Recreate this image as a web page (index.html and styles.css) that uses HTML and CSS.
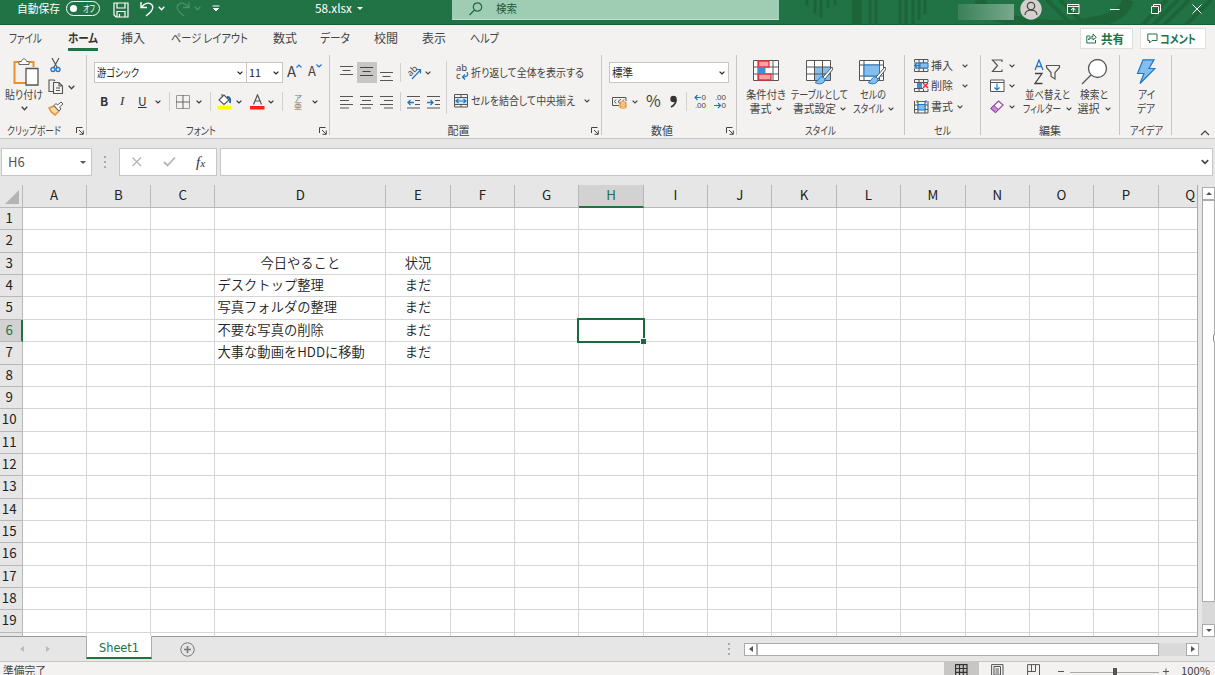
FILE: index.html
```html
<!DOCTYPE html>
<html lang="ja">
<head>
    <meta charset="UTF-8">
    <meta name="viewport" content="width=device-width, initial-scale=1.0">
    <title>58.xlsx</title>
    <link rel="stylesheet" href="styles.css">
</head>
<body>
    <svg class="defs">
        <symbol id="chev" viewBox="0 0 6 4"><path d="M.6 .6L3 3L5.4 .6" fill="none" stroke="currentColor" stroke-width="1.2"/></symbol>
        <symbol id="launch" viewBox="0 0 8 8"><path d="M.5 6V.5H6.500M3 3L7 7M7.300 3.500V7.300H3.500" fill="none" stroke="currentColor"/></symbol>
        <symbol id="brush" viewBox="0 0 18 19"><path d="M17 1L8 11L10 13L18 3Z" fill="#fff" stroke="#555"/><path d="M8 11C4 10 4 15 0 16.500C4 19 10 18 10 13Z" fill="#83beec" stroke="#1e78c8"/></symbol>
    </svg>

    <div class="titlebar">
        <svg class="pattern" width="430" height="25">
            <g fill="none" stroke="#1d6439" stroke-width="3">
                <path d="M22 0V6M30 0V14M36 0V18M43 0V8M50 0V5M85 0V25M91 0V25M115 0V25M121 0V25M128 0V25M134 0V20M140 0V14"/>
                <path d="M72 0V25" stroke-width="10"/>
                <path d="M195 0C200 30 335 38 343 0" stroke-width="11"/>
                <path d="M262 0L287 25M275 0L300 25M357 25L382 0M368 25L393 0M379 25L404 0M401 25L426 0" stroke-width="4"/>
            </g>
        </svg>
        <span class="t autosave" data-w="43">自動保存</span>
        <div class="toggle"><i></i><span class="t" data-w="12">オフ</span></div>
        <svg class="save" width="16" height="16" viewBox="0 0 16 16"><path d="M1 1H15V15H3L1 13ZM4 1V6H12V1M4 15V9.500H12V15M6.500 15V12" fill="none" stroke="#fff" stroke-width="1.200"/></svg>
        <svg class="undo" width="15" height="16" viewBox="0 0 15 16"><path d="M1 1V6.500H7M1.500 6.200C4 2.500 9 .5 12 4C15 8 10 12 6 15" fill="none" stroke="#fff" stroke-width="1.400"/></svg>
        <svg class="c1" width="7" height="5"><use href="#chev"/></svg>
        <svg class="redo" width="15" height="16" viewBox="0 0 15 16"><path d="M14 1V6.500H8M13.500 6.200C11 2.500 6 .5 3 4C0 8 5 12 9 15" fill="none" stroke="#4c9068" stroke-width="1.300"/></svg>
        <svg class="c2" width="7" height="5"><use href="#chev"/></svg>
        <svg class="custom" width="8" height="8"><path d="M.5 1H7.500M1.500 3.500L4 6L6.500 3.500Z" fill="#fff" stroke="#fff"/></svg>
        <span class="t filename" data-w="37">58.xlsx</span>
        <i class="caret"></i>
        <div class="search">
            <svg width="14" height="14" viewBox="0 0 14 14"><circle cx="8.500" cy="5" r="4.200" fill="none" stroke="#1d6b3e" stroke-width="1.200"/><path d="M5.500 8L.5 13" stroke="#1d6b3e" stroke-width="1.300"/></svg>
            <span class="t" data-w="21">検索</span>
        </div>
        <div class="account"></div>
        <svg class="avatar" width="22" height="22"><circle cx="11" cy="11" r="10.700" fill="#d4d0ce"/><circle cx="11" cy="8" r="3.700" fill="none" stroke="#444" stroke-width="1.200"/><path d="M5 17C5 10.500 17 10.500 17 17" fill="none" stroke="#444" stroke-width="1.200"/></svg>
        <svg class="winbtns" width="136" height="12" fill="none" stroke="#fff"><path d="M.5 1.500H12V10.500H.5ZM.5 3.500H12M6.300 9V5M4 7L6.300 5L8.600 7M43 6.500H52.500M84.500 3.500H91.500V10.500H84.500ZM86.500 3V1.500H93.500V8.500H92M125.500 1.500L134.500 10.500M134.500 1.500L125.500 10.500"/></svg>
    </div>

    <div class="tabs">
        <span class="t" data-w="33">ファイル</span>
        <span class="active"><span class="t" data-w="30">ホーム</span></span>
        <span class="t" data-w="24">挿入</span>
        <span class="t" data-w="77">ページ レイアウト</span>
        <span class="t" data-w="24">数式</span>
        <span class="t" data-w="30">データ</span>
        <span class="t" data-w="24">校閲</span>
        <span class="t" data-w="24">表示</span>
        <span class="t" data-w="29">ヘルプ</span>
        <div class="tab-btn share"><svg width="11" height="11" fill="none" stroke="#217346"><path d="M4 3H.8V10H9.500V7M2.500 7C3 4 5 3.500 7 3.500V1L10.300 4.300L7 7V5C5 5 3.500 5.500 2.500 7Z"/></svg><span class="t" data-w="23">共有</span></div>
        <div class="tab-btn comment"><svg width="11" height="11" fill="none" stroke="#217346"><path d="M.8 1H10V7.500H5L2.500 10V7.500H.8Z"/></svg><span class="t" data-w="36">コメント</span></div>
    </div>

    <div class="ribbon">
        <div class="group clipboard">
            <div class="body">
                <div class="big">
                    <svg class="pic" width="26" height="28" viewBox="0 0 26 28"><path d="M8 4H1.500V25H13M15 4H20.500V9" fill="none" stroke="#e8912d" stroke-width="2"/><path d="M6 6.500V3.500H8.500C9 0 13 0 13.500 3.500H16V6.500Z" fill="#fff" stroke="#666"/><path d="M13 10.500H25V27H13Z" fill="#fff" stroke="#555" stroke-width="1.300"/></svg>
                    <span class="t" data-w="38">貼り付け</span>
                    <svg class="chev" width="7" height="5"><use href="#chev"/></svg>
                </div>
                <div class="clip-tools">
                    <svg width="15" height="16" viewBox="0 0 15 16"><path d="M4 1L9.500 11M11 1L5.500 11" stroke="#555" stroke-width="1.200"/><circle cx="5" cy="12.500" r="2" fill="none" stroke="#1e78c8" stroke-width="1.300"/><circle cx="10" cy="12.500" r="2" fill="none" stroke="#1e78c8" stroke-width="1.300"/></svg>
                    <div class="copy"><svg width="16" height="16" fill="none" stroke="#555" stroke-width="1.100"><path d="M5 12.500H1V1H6L7 2M5.500 3.500H11L14.500 7V14.500H5.500ZM11 3.500V7H14.500M8 9H12M8 11.500H12"/></svg><svg class="chev" width="7" height="5"><use href="#chev"/></svg></div>
                    <svg width="16" height="15"><path d="M1 7L6 5L11 10L7 14C5 12 3 12 1 7Z" fill="#fbd9ae" stroke="#e8912d" stroke-width="1.500"/><path d="M6 4.500L8 2.500L9.500 4L13 1L15 3L11.500 6L13 8L11 10Z" fill="#fff" stroke="#555"/></svg>
                </div>
            </div>
            <div class="label"><span class="t" data-w="54">クリップボード</span><svg width="8" height="8"><use href="#launch"/></svg></div>
        </div>

        <div class="group font">
            <div class="body">
                <div class="row font-1">
                    <div class="combo"><span class="t" data-w="42">游ゴシック</span><svg width="6" height="4"><use href="#chev"/></svg></div>
                    <div class="combo"><span class="t" data-w="12">11</span><svg width="6" height="4"><use href="#chev"/></svg></div>
                    <span class="grow">A<svg width="6" height="4"><path d="M.5 3.500L3 1L5.500 3.500" fill="none" stroke="#1e78c8" stroke-width="1.200"/></svg></span>
                    <span class="grow small">A<svg width="6" height="4"><path d="M.5 .5L3 3L5.500 .5" fill="none" stroke="#1e78c8" stroke-width="1.200"/></svg></span>
                </div>
                <div class="row font-2">
                    <b>B</b><em>I</em><u>U</u>
                    <svg width="6" height="4"><use href="#chev"/></svg>
                    <i class="sep"></i>
                    <svg width="14" height="14" fill="none" stroke="#555"><path d="M.5 .5H13.500V13.500H.5Z" stroke="#999"/><path d="M7 0V14M0 7H14" stroke="#666"/></svg>
                    <svg width="6" height="4"><use href="#chev"/></svg>
                    <i class="sep"></i>
                    <svg width="15" height="16"><path d="M2 6L7 1L12 6L7 10.500ZM5 3V0" fill="#fff" stroke="#555" stroke-width="1.100"/><path d="M10 3C13.500 3 13.500 6 13 9" fill="none" stroke="#1a5fa0" stroke-width="1.800"/><path d="M.5 12H14.500V15.500H.5Z" fill="#ff0"/></svg>
                    <svg width="6" height="4"><use href="#chev"/></svg>
                    <svg width="15" height="16"><path d="M3.500 10.500L7.500 .8L11.500 10.500M5 7H10" fill="none" stroke="#555" stroke-width="1.200"/><path d="M0 12H14.500V15.500H0Z" fill="#fd2310"/></svg>
                    <svg width="6" height="4"><use href="#chev"/></svg>
                    <i class="sep"></i>
                    <span class="ruby"><span>ア</span><span>亜</span></span>
                    <svg width="6" height="4"><use href="#chev"/></svg>
                </div>
            </div>
            <div class="label"><span class="t" data-w="30">フォント</span><svg width="8" height="8"><use href="#launch"/></svg></div>
        </div>

        <div class="group align">
            <div class="body">
                <div class="row align-1">
                    <svg width="14" height="20" stroke="#555"><path d="M0 3.500H13M2.500 7.500H10.500M0 11.500H13"/></svg>
                    <span class="pressed"><svg width="14" height="20" stroke="#444"><path d="M0 5.500H13M2.500 9.500H10.500M0 13.500H13"/></svg></span>
                    <svg width="14" height="20" stroke="#555"><path d="M0 9.500H13M2.500 13.500H10.500M0 17.500H13"/></svg>
                    <i class="sep"></i>
                    <span class="orient"><span>ab</span><svg width="15" height="15"><path d="M5 14L13.500 5M9.500 4.500H13.500V8.500" fill="none" stroke="#1e78c8" stroke-width="1.200"/></svg></span>
                    <svg width="6" height="4"><use href="#chev"/></svg>
                </div>
                <div class="row align-2">
                    <svg width="14" height="14" stroke="#555"><path d="M0 1.500H13M0 5.500H9M0 9.500H13M0 13H9"/></svg>
                    <svg width="14" height="14" stroke="#555"><path d="M0 1.500H13M2 5.500H11M0 9.500H13M2 13H11"/></svg>
                    <svg width="14" height="14" stroke="#555"><path d="M0 1.500H13M4 5.500H13M0 9.500H13M4 13H13"/></svg>
                    <i class="sep"></i>
                    <svg width="14" height="14" stroke="#555"><path d="M0 1.500H13M8 5.500H13M8 9.500H13M0 13H13"/><path d="M1 7.500H7M3.500 5L1 7.500L3.500 10" fill="none" stroke="#1e78c8" stroke-width="1.300"/></svg>
                    <svg width="14" height="14" stroke="#555"><path d="M0 1.500H13M8 5.500H13M8 9.500H13M0 13H13"/><path d="M0 7.500H6M3.500 5L6 7.500L3.500 10" fill="none" stroke="#1e78c8" stroke-width="1.300"/></svg>
                </div>
            </div>
            <div class="wide">
                <div class="line"><span class="wrap"><span>ab</span><span>c<svg width="8" height="9"><path d="M6 0C8 4 5 5 1.500 5M4 2.500L1.500 5L4 7.500" fill="none" stroke="#1e78c8" stroke-width="1.300"/></svg></span></span><span class="t" data-w="113">折り返して全体を表示する</span></div>
                <div class="line"><svg width="15" height="14" fill="none"><path d="M.5 .5H13.500V13H.5ZM.5 3.500H13.500M.5 10.500H13.500M7 .5V3.500M7 10.500V13" stroke="#555"/><path d="M1 4H13V10H1Z" fill="#cfe6f8"/><path d="M2 7H12M4.500 5L2 7L4.500 9M9.500 5L12 7L9.500 9" stroke="#1e78c8" stroke-width="1.200"/></svg><span class="t" data-w="104">セルを結合して中央揃え</span><svg class="chev" width="6" height="4"><use href="#chev"/></svg></div>
            </div>
            <div class="label"><span class="t" data-w="22">配置</span><svg width="8" height="8"><use href="#launch"/></svg></div>
        </div>

        <div class="group number">
            <div class="body">
                <div class="row"><div class="combo"><span class="t" data-w="21">標準</span><svg width="6" height="4"><use href="#chev"/></svg></div></div>
                <div class="row number-2">
                    <svg width="16" height="14" fill="none"><path d="M.5 2.500H14V6M.5 2.500V10.500H7" stroke="#555"/><path d="M4 4.500L2.500 6.500L4 8.500M9 4.500C6 4.500 6 8.500 8 8.500M12 4.500L10.500 6" stroke="#555"/><path d="M8 8V12C8 13.500 14 13.500 14 12V8C14 6.500 8 6.500 8 8C8 9.500 14 9.500 14 8M8 10.500C9 11.500 13 11.500 14 10.500" stroke="#e8912d" fill="#fff" stroke-width="1.200"/></svg>
                    <svg width="6" height="4"><use href="#chev"/></svg>
                    <span class="pct">%</span>
                    <svg width="9" height="14"><circle cx="4.500" cy="4" r="3.200" fill="#333"/><path d="M7 4.500C7 8 5 10.500 2 12" fill="none" stroke="#333" stroke-width="1.800"/></svg>
                    <i class="sep"></i>
                    <span class="dec"><span><svg width="8" height="7"><path d="M1 3.500H7M3.500 1L1 3.500L3.500 6" fill="none" stroke="#1e78c8" stroke-width="1.200"/></svg>0</span><span>.00</span></span>
                    <span class="dec"><span>.00</span><span><svg width="8" height="7"><path d="M0 3.500H6.500M4 1L6.500 3.500L4 6" fill="none" stroke="#1e78c8" stroke-width="1.200"/></svg>0</span></span>
                </div>
            </div>
            <div class="label"><span class="t" data-w="22">数値</span><svg width="8" height="8"><use href="#launch"/></svg></div>
        </div>

        <div class="group styles">
            <div class="bigs">
                <div class="big">
                    <svg class="pic" width="26" height="26"><path d="M.5 1.500H25.500V21.500H.5ZM.5 8H25.500M.5 15H25.500M5 1.500V21.500M20 1.500V21.500" fill="#fff" stroke="#555"/><path d="M5.500 2H16V8H5.500ZM5.500 15H18V21H5.500Z" fill="#f9a3a8" stroke="#e8303a" stroke-width="1.300"/><path d="M5 8.500H12.500V14.500H5Z" fill="#3d90d6"/></svg>
                    <span class="t" data-w="40">条件付き</span>
                    <span><span class="t" data-w="22">書式</span><svg class="chev" width="6" height="4"><use href="#chev"/></svg></span>
                </div>
                <div class="big">
                    <svg class="pic" width="28" height="26"><path d="M.5 1.500H24.500V21.500H.5Z" fill="#fff"/><path d="M8.500 8H24.500V21.500H8.500Z" fill="#83beec"/><path d="M.5 1.500H24.500V21.500H.5ZM.5 8H24.500M.5 15H24.500M8.500 1.500V21.500M16.500 1.500V21.500" fill="none" stroke="#555"/><use href="#brush" x="9" y="7" width="18" height="19"/></svg>
                    <span class="t" data-w="57">テーブルとして</span>
                    <span><span class="t" data-w="43">書式設定</span><svg class="chev" width="6" height="4"><use href="#chev"/></svg></span>
                </div>
                <div class="big">
                    <svg class="pic" width="28" height="26"><path d="M.5 1.500H24.500V21.500H.5ZM.5 6H24.500M.5 17H24.500M5 1.500V21.500M20.500 1.500V21.500" fill="#fff" stroke="#555"/><path d="M5 6H20.500V17H5Z" fill="#83beec" stroke="#1e78c8"/><use href="#brush" x="9" y="7" width="18" height="19"/></svg>
                    <span class="t" data-w="26">セルの</span>
                    <span><span class="t" data-w="31">スタイル</span><svg class="chev" width="6" height="4"><use href="#chev"/></svg></span>
                </div>
            </div>
            <div class="label"><span class="t" data-w="31">スタイル</span></div>
        </div>

        <div class="group cells">
            <div class="stack">
                <div class="line"><svg width="15" height="14" fill="none"><path d="M.5 3V.5H14V3M.5 10V12.500H14V10M5 .5V12.500M9.500 .5V12.500M0 4H14M0 9H14" stroke="#555"/><path d="M6 4H14V9H6Z" fill="#83beec" stroke="#1e78c8"/><path d="M0 6.500H6M3 4L.5 6.500L3 9" stroke="#1e78c8" stroke-width="1.300"/></svg><span class="t" data-w="22">挿入</span><svg class="chev" width="6" height="4"><use href="#chev"/></svg></div>
                <div class="line"><svg width="15" height="14" fill="none"><path d="M.5 3V.5H14V3M.5 10V12.500H14V10M5 .5V3M9.500 .5V3M5 10V12.500M9.500 10V12.500M0 3.500H14M0 9.500H9" stroke="#555"/><path d="M3 4H8V9H3Z" fill="#3d90d6"/><path d="M9 4L14 9M14 4L9 9" stroke="#e8303a" stroke-width="1.500"/></svg><span class="t" data-w="22">削除</span><svg class="chev" width="6" height="4"><use href="#chev"/></svg></div>
                <div class="line"><svg width="15" height="14" fill="none"><path d="M.5 1V13H14V1M4 1V13M11 1V13M.5 5H14M.5 9.500H14" stroke="#555"/><path d="M4 4.500H11V10H4Z" fill="#83beec" stroke="#1e78c8"/><path d="M3 1.500H12M3 0V3M12 0V3" stroke="#1e78c8"/></svg><span class="t" data-w="22">書式</span><svg class="chev near" width="6" height="4"><use href="#chev"/></svg></div>
            </div>
            <div class="label"><span class="t" data-w="17">セル</span></div>
        </div>

        <div class="group edit">
            <div class="stack">
                <div class="line"><svg width="15" height="14"><path d="M12 3V1H2.500L7.500 6.500L2.500 12.500H12V10.500" fill="none" stroke="#555" stroke-width="1.200"/></svg><svg class="chev" width="6" height="4"><use href="#chev"/></svg></div>
                <div class="line"><svg width="15" height="14" fill="none"><path d="M.5 1H14V12.500H.5ZM.5 3.500H14" stroke="#555" fill="#fff"/><path d="M7 4.500V11M4.500 8.500L7 11L9.500 8.500" stroke="#1e78c8" stroke-width="1.200"/></svg><svg class="chev" width="6" height="4"><use href="#chev"/></svg></div>
                <div class="line"><svg width="15" height="14"><path d="M1 8.500L8.500 1L13 5L5.500 12.500Z" fill="#fff" stroke="#9b3fa8" stroke-width="1.200"/><path d="M1 8.500L4 5.500L8.500 9.500L5.500 12.500Z" fill="#c98bd2" stroke="#9b3fa8"/></svg><svg class="chev" width="6" height="4"><use href="#chev"/></svg></div>
            </div>
            <div class="bigs">
                <div class="big">
                    <svg class="pic" width="27" height="26" fill="none"><path d="M1 11L5 1L9 11M2.500 7.500H7.500" stroke="#1e78c8" stroke-width="1.300"/><path d="M1 14.500H8L1 24.500H8.500" stroke="#444" stroke-width="1.300"/><path d="M12.500 6.500H25.500V8.500L21 13.500V20L17 17.500V13.500L12.500 8.500Z" stroke="#555" stroke-width="1.200"/></svg>
                    <span class="t" data-w="45">並べ替えと</span>
                    <span><span class="t" data-w="38">フィルター</span><svg class="chev" width="6" height="4"><use href="#chev"/></svg></span>
                </div>
                <div class="big">
                    <svg class="pic" width="27" height="26" fill="none" stroke="#555" stroke-width="1.300"><circle cx="16.500" cy="9.500" r="9" fill="#fff"/><path d="M10 16L1 25"/></svg>
                    <span class="t" data-w="28">検索と</span>
                    <span><span class="t" data-w="22">選択</span><svg class="chev" width="6" height="4"><use href="#chev"/></svg></span>
                </div>
            </div>
            <div class="label"><span class="t" data-w="22">編集</span></div>
        </div>

        <div class="group ideas">
            <div class="bigs">
                <div class="big">
                    <svg class="pic" width="20" height="26"><path d="M7 .8H18L13 9.500H19L4 24.500L8 14.500H1.500Z" fill="#83beec" stroke="#1e78c8" stroke-width="1.200"/></svg>
                    <span class="t" data-w="17">アイ</span>
                    <span><span class="t" data-w="18">デア</span></span>
                </div>
            </div>
            <div class="label"><span class="t" data-w="33">アイデア</span></div>
        </div>
        <svg class="collapse" width="10" height="6"><path d="M1 5L5 1L9 5" fill="none" stroke="#444" stroke-width="1.200"/></svg>
    </div>

    <div class="formula">
        <div class="namebox"><span>H6</span><i class="caret"></i></div>
        <span class="dots"><i></i><i></i><i></i></span>
        <div class="fx">
            <svg width="12" height="12"><path d="M1.500 1.500L10 10M10 1.500L1.500 10" stroke="#b4b4b4" stroke-width="1.300"/></svg>
            <svg width="13" height="12"><path d="M1 6L4.500 9.500L12 1.500" fill="none" stroke="#b4b4b4" stroke-width="1.800"/></svg>
            <span>f<small>x</small></span>
        </div>
        <div class="input"><svg width="8" height="6" viewBox="0 0 6 4"><use href="#chev"/></svg></div>
    </div>

    <div class="work">
        <div class="sheet" id="sheet"></div>
        <div class="vscroll">
            <div class="arrow"><i class="up"></i></div>
            <div class="thumb"></div>
            <div class="track"></div>
            <div class="arrow"><i class="down"></i></div>
            <span class="cursor"></span>
        </div>
    </div>

    <div class="sheetbar">
        <i class="left"></i><i class="right"></i>
        <div class="sheet-tab"><span class="t" data-w="40">Sheet1</span></div>
        <svg class="add" width="15" height="15" fill="none" stroke="#777"><circle cx="7.500" cy="7.500" r="6.700"/><path d="M7.500 4V11M4 7.500H11" stroke-width="1.700"/></svg>
        <span class="dots"><i></i><i></i><i></i></span>
        <div class="hscroll">
            <div class="arrow"><i class="left"></i></div>
            <div class="thumb"></div>
            <div class="track"></div>
            <div class="arrow"><i class="right"></i></div>
        </div>
    </div>

    <div class="status">
        <span class="t" data-w="43">準備完了</span>
        <div class="views">
            <span class="on"><svg width="13" height="13" fill="none" stroke="#333" stroke-width="1.200"><path d="M.6 .6H12V12H.6ZM4.500 0V12M8.300 0V12M0 4.500H12M0 8.300H12"/></svg></span>
            <svg width="13" height="13" fill="none" stroke="#555"><path d="M.6 .6H12V12.500H.6ZM3 2.500H9.500V11H3ZM4.500 5H8M4.500 7H8M4.500 9H8"/></svg>
            <svg width="14" height="13" fill="none" stroke="#555"><path d="M.6 13V.6H12.500V13M.6 7.500H8.500M4.500 .6V7.500M8.500 .6V7.500"/></svg>
        </div>
        <svg class="zoom" width="112" height="12" stroke="#555"><path d="M0 6.500H6M105 6.500H111M108 3.500V9.500"/><path d="M12 7.500H101" stroke="#aaa"/><path d="M57 3V12" stroke-width="4"/></svg>
        <span class="t" data-w="29">100%</span>
    </div>
    <script src="script.js"></script>
</body>
</html>
```
FILE: styles.css
```css
* {
    box-sizing: border-box;
}

body {
    margin: 0;
    width: 1215px;
    height: 675px;
    overflow: hidden;
    background: #e6e6e6;
    color: #444;
    font-family: "Noto Sans CJK JP", sans-serif;
    font-size: 11px;
    line-height: 14px;
}

svg {
    display: block;
    flex: none;
}

.defs {
    display: none;
}

.t {
    display: inline-block;
    flex: none;
    white-space: nowrap;
    transform-origin: 0 50%;
    translate: 0 -1px;
    font-feature-settings: "palt";
}

.label .t,
.status .t,
.sheet-tab .t {
    translate: none;
}

.caret {
    border: 3px solid transparent;
    border-top: 3px solid currentColor;
    border-bottom: 0;
}

/* title bar */
.titlebar {
    position: relative;
    display: flex;
    align-items: center;
    height: 25px;
    padding: 0 0 7px 17px;
    background: #217346;
    border-bottom: 1px solid #185c37;
    color: #fff;
}

.titlebar > * {
    position: relative;
}

.titlebar > .pattern {
    position: absolute;
    top: 0;
    right: 0;
}

.toggle {
    display: flex;
    align-items: center;
    justify-content: space-between;
    width: 34px;
    height: 15px;
    margin-left: 6px;
    padding: 0 4px 0 3px;
    border: 1px solid #fff;
    border-radius: 8px;
    font-size: 9px;
}

.toggle .t {
    translate: none;
}

.toggle i {
    width: 7px;
    height: 7px;
    border-radius: 50%;
    background: #fff;
}

.save {
    margin: 2px 0 0 13px;
}

.undo {
    margin-left: 11px;
}

.c1 {
    margin-left: 3px;
}

.redo {
    margin-left: 10px;
}

.c2 {
    margin-left: 4px;
    color: #4c9068;
}

.custom {
    margin-left: 11px;
}

.filename {
    margin-left: 95px;
    font-size: 12px;
}

.titlebar .caret {
    margin-left: 5px;
}

.search {
    display: flex;
    align-self: flex-start;
    align-items: center;
    gap: 13px;
    width: 327px;
    height: 20px;
    margin: 0 0 -3px 89px;
    padding: 0 0 2px 17px;
    background: #9fcdb4;
    border-bottom: 1px solid #c0dfcd;
    color: #1d5b38;
}

.account {
    width: 56px;
    height: 16px;
    margin: 6px 0 0 179px;
    background: linear-gradient(90deg, #3a8159, #79a98d);
}

.avatar {
    margin: 0 0 0 6px;
}

.winbtns {
    margin-left: 25px;
}

/* ribbon tabs */
.tabs {
    display: flex;
    align-items: center;
    height: 27px;
    padding-left: 9px;
    background: #f3f2f1;
    font-size: 12px;
}

.tabs > .t {
    margin-right: 24px;
}

.tabs .active {
    height: 22px;
    margin: 3px 23px 0 2px;
    padding-top: 3px;
    border-bottom: 3px solid #217346;
    color: #333;
    font-weight: bold;
}

.tabs > .t:nth-child(4) {
    margin-right: 25px;
}

.tabs > .t:nth-child(3) {
    margin-right: 26px;
}

.tabs > .t:nth-child(5) {
    margin-right: 23px;
}

.tab-btn {
    display: flex;
    align-items: center;
    gap: 2px;
    height: 21px;
    border: 1px solid #e1dfdd;
    background: #fff;
    color: #217346;
    font-weight: bold;
}

.tab-btn .t {
    translate: none;
}

.share {
    width: 53px;
    margin-left: 557px;
    padding-left: 5px;
    gap: 4px;
}

.comment {
    width: 66px;
    margin-left: 7px;
    padding-left: 6px;
}

/* ribbon */
.ribbon {
    display: flex;
    height: 87px;
    padding-top: 3px;
    background: #f3f2f1;
    border-bottom: 1px solid #c8c6c4;
}

.group {
    display: grid;
    grid-template-rows: 68px 14px;
    align-content: start;
    height: 80px;
    border-right: 1px solid #c8c6c4;
}

.label {
    display: flex;
    grid-column: 1 / -1;
    align-items: center;
    justify-content: center;
}

.label svg {
    margin: 2px 2px 0 auto;
}

.label .t:first-child:not(:last-child) {
    margin: 0 4px 0 auto;
}

.clipboard {
    width: 87px;
}

.font {
    width: 243px;
}

.align {
    width: 272px;
    grid-template-columns: 116px 1fr;
}

.number {
    width: 135px;
}

.styles {
    width: 168px;
}

.cells {
    width: 76px;
}

.edit {
    width: 139px;
    grid-template-columns: 41px 1fr;
}

.ideas {
    width: 52px;
}

.clipboard .body {
    display: flex;
    padding-left: 5px;
}

.clipboard .label {
    padding-left: 7px;
}

.clipboard .label .t:first-child:not(:last-child) {
    margin-left: 0;
}

.big {
    display: flex;
    flex-direction: column;
    align-items: center;
    padding-top: 4px;
}

.big .pic {
    margin-bottom: 3px;
}

.big > span {
    flex: none;
    height: 14px;
}

.big > span:last-child {
    display: flex;
    align-items: center;
    gap: 4px;
}

.clipboard .pic {
    margin: -1px 0 2px 4px;
}

.big > .chev {
    margin-top: 4px;
}

.clip-tools {
    display: flex;
    flex-direction: column;
    gap: 6px;
    padding: 2px 0 0 5px;
}

.copy {
    display: flex;
    align-items: center;
    gap: 4px;
}

.row {
    display: grid;
    align-items: center;
    height: 21px;
}

.row + .row {
    margin-top: 8px;
}

.font .body,
.number .body {
    padding: 7px 0 0 7px;
}

.font-1 {
    grid-template-columns: 153px 40px 21px 20px;
}

.font-2 {
    grid-template-columns: 20px 18px 17px 14px 7px 20px 14px 7px 19px 14px 18px 14px 12px 18px 8px;
    padding-left: 6px;
    font-size: 12px;
    color: #333;
}

.font-2 > b,
.font-2 > em,
.font-2 > u {
    margin-top: -2px;
}

.font-2 em {
    font-family: "Liberation Serif", serif;
    font-size: 13px;
}

.combo {
    display: flex;
    align-items: center;
    justify-content: space-between;
    height: 21px;
    padding: 0 3px 0 2px;
    border: 1px solid #c8c6c4;
    background: #fff;
    color: #222;
}

.font-1 .combo + .combo {
    width: 37px;
    margin-left: -1px;
}

.grow {
    display: flex;
    font-size: 15px;
    line-height: 20px;
    margin-top: -4px;
}

.grow.small {
    font-size: 13px;
}

.grow svg {
    margin-top: 3px;
}

.sep {
    width: 1px;
    height: 19px;
    background: #d2d0ce;
}

.ruby {
    display: flex;
    flex-direction: column;
    color: #777;
    font-size: 8px;
    line-height: 8px;
}

.align .body {
    padding: 7px 0 0 10px;
}

.align-1,
.align-2 {
    grid-template-columns: 20px 20px 20px 7px 20px 10px;
}

.align-1 {
    grid-template-columns: 17px 23px 20px 7px 18px 10px;
}

.pressed {
    width: 20px;
    height: 21px;
    padding-left: 3px;
    background: #c8c6c4;
}

.orient {
    display: grid;
    font: 9px/10px "Noto Sans", sans-serif;
}

.orient > * {
    grid-area: 1 / 1;
}

.orient > span {
    width: 10px;
    height: 10px;
    margin-top: 1px;
    transform: rotate(-45deg);
}

.wrap {
    display: flex;
    flex-direction: column;
    width: 15px;
    padding-left: 2px;
    font: 9.5px/8px "Noto Sans", sans-serif;
}

.wrap > span {
    display: flex;
}

.dec {
    display: flex;
    flex-direction: column;
    align-items: flex-end;
    width: 14px;
    font: 8px/8px "Liberation Sans", sans-serif;
}

.dec > span {
    display: flex;
}

.wide {
    height: 53px;
    margin-top: 6px;
    padding: 4px 0 0 8px;
    border-left: 1px solid #d2d0ce;
}

.line {
    display: flex;
    align-items: center;
    height: 15px;
    gap: 2px;
}

.wide .line {
    margin: 0 0 13px -1px;
}

.wide .chev {
    margin-left: 7px;
}

.number .combo {
    width: 120px;
}

.number-2 {
    grid-template-columns: 20px 14px 23px 17px 6px 20px 15px;
    padding-left: 3px;
}

.pct {
    margin-top: -3px;
    font-size: 16px;
}

.bigs {
    display: flex;
}

.styles .big:nth-child(1) {
    width: 57px;
}

.styles .big:nth-child(2) {
    width: 51px;
}

.styles .big:nth-child(3) {
    width: 56px;
}

.stack {
    display: grid;
    grid-template-rows: repeat(3, 20.5px);
    padding: 3px 0 0 9px;
}

.cells .chev {
    margin-left: 7px;
}

.cells .chev.near {
    margin-left: 2px;
}

.edit .chev {
    margin-left: 1px;
}

.edit .stack .chev {
    margin-left: 2px;
}

.edit .bigs .big {
    width: 51px;
}

.edit .bigs .big + .big {
    width: 42px;
}

.ideas .big {
    width: 52px;
}

.collapse {
    margin: 75px 0 0 28px;
}

/* formula bar */
.formula {
    display: flex;
    height: 46px;
    padding: 9px 0 9px 1px;
}

.namebox,
.fx,
.input {
    display: flex;
    align-items: center;
    height: 28px;
    border: 1px solid #c6c6c6;
    background: #fff;
}

.namebox {
    justify-content: space-between;
    width: 91px;
    padding: 0 5px 0 6px;
    font-size: 13px;
    color: #555;
}

.formula .dots {
    margin: 8px 13px 0 12px;
}

.dots {
    display: flex;
    flex-direction: column;
    gap: 3px;
}

.dots i {
    width: 2px;
    height: 2px;
    background: #aaa;
}

.fx {
    width: 98px;
    padding-left: 11px;
    gap: 20px;
}

.fx span {
    font: italic 15px "Liberation Serif", serif;
    color: #333;
}

.fx small {
    font-size: 11px;
}

.input {
    flex: none;
    justify-content: flex-end;
    width: 993px;
    margin-left: 3px;
    padding-right: 3px;
}

/* worksheet */
.work {
    display: flex;
    height: 452px;
}

.sheet {
    display: grid;
    grid-template-columns: 22.5px repeat(3, 64.33px) 170.8px repeat(12, 64.36px) 64px;
    grid-template-rows: 23px;
    grid-auto-rows: 22.37px;
    width: 1198px;
    height: 452px;
    overflow: hidden;
    border-right: 1px solid #ababab;
    border-bottom: 1px solid #9a9a9a;
    color: #222;
    font-size: 13.3px;
}

.sheet div {
    position: relative;
    border: solid #d6d6d6;
    border-width: 0 1px 1px 0;
    background: #fff;
    line-height: 20px;
    white-space: nowrap;
}

.sheet .center {
    text-align: center;
}

.sheet .text {
    padding-left: 2px;
    font-weight: 350;
}

.sheet .center.text {
    padding-left: 0;
}

.sheet .col,
.sheet .rowhead,
.sheet .corner {
    background: #e6e6e6;
    border-color: #b8b8b8;
    text-align: center;
}

.sheet .rowhead {
    padding-right: 3px;
}

.sheet .col.sel,
.sheet .rowhead.sel {
    background: #d2d2d2;
    color: #217346;
}

.sheet .col.sel {
    border-bottom: 2px solid #217346;
}

.sheet .rowhead.sel {
    border-right: 2px solid #217346;
    padding-right: 2px;
}

.corner::after {
    content: "";
    position: absolute;
    right: 3px;
    bottom: 3px;
    border: 7px solid #b4b4b4;
    border-top-color: transparent;
    border-left-color: transparent;
}

.cell-cursor {
    position: absolute;
    z-index: 1;
    inset: -2px -2px -2px -2px;
    border: 2px solid #1a6b3c;
}

.cell-cursor::after {
    content: "";
    position: absolute;
    right: -3px;
    bottom: -3px;
    width: 5px;
    height: 5px;
    border: solid #fff;
    border-width: 1px 0 0 1px;
    background: #1a6b3c;
}

/* scroll bars */
.arrow {
    display: flex;
    align-items: center;
    justify-content: center;
    flex: none;
    width: 13px;
    height: 13px;
    border: 1px solid #ababab;
    background: #fff;
    color: #555;
}

.up {
    border: 3px solid transparent;
    border-top: 0;
    border-bottom: 3px solid currentColor;
}

.down {
    border: 3px solid transparent;
    border-bottom: 0;
    border-top: 3px solid currentColor;
}

.left {
    border: 3px solid transparent;
    border-left: 0;
    border-right: 4px solid currentColor;
}

.right {
    border: 3px solid transparent;
    border-right: 0;
    border-left: 4px solid currentColor;
}

.thumb {
    flex: none;
    border: 1px solid #ababab;
    background: #fff;
}

.track {
    flex: 1;
    background: #d9d9d9;
}

.vscroll {
    position: relative;
    display: flex;
    flex-direction: column;
    width: 13px;
    margin: 2px 0 0 4px;
    overflow: hidden;
}

.vscroll .thumb {
    height: 402px;
}

.cursor {
    position: absolute;
    top: 146px;
    left: 11px;
    width: 8px;
    height: 10px;
    border: 1px solid #888;
    border-radius: 3px;
    background: #fff;
}

.sheetbar {
    display: flex;
    align-items: center;
    height: 25px;
    padding-left: 20px;
    border-bottom: 1px solid #c8c6c4;
    color: #bbb;
}

.sheetbar > .right {
    margin-left: 22px;
}

.sheet-tab {
    display: flex;
    align-items: center;
    justify-content: center;
    width: 66px;
    height: 23px;
    margin: -3px 0 0 36px;
    padding-top: 2px;
    border: solid #ababab;
    border-width: 0 1px;
    border-bottom: 2px solid #217346;
    background: #fff;
    color: #217346;
    font: 11.5px "DejaVu Sans", sans-serif;
}

.add {
    margin-left: 28px;
}

.sheetbar .dots {
    margin-left: 533px;
}

.hscroll {
    display: flex;
    width: 455px;
    height: 13px;
    margin-left: 14px;
}

.hscroll .thumb {
    width: 402px;
}

/* status bar */
.status {
    display: flex;
    height: 13px;
    padding-left: 3px;
    background: #f3f2f1;
    overflow: hidden;
}

.status > .t {
    margin-top: 1px;
}

.views {
    display: flex;
    align-items: flex-start;
    margin-left: 898px;
}

.views > svg {
    margin: 2px 0 0 12px;
}

.views > svg:last-child {
    margin-left: 23px;
}

.on {
    width: 35px;
    height: 13px;
    padding: 2px 0 0 11px;
    background: #c8c6c4;
}

.zoom {
    margin: 3px 11px 0 17px;
}
```
FILE: script.js
```js
// squeeze UI labels to their menu widths
document.querySelectorAll('.t').forEach(function(el) {
    const natural = el.getBoundingClientRect().width;
    const w = Number(el.dataset.w);
    el.style.width = w + 'px';
    el.style.transform = 'scaleX(' + (w / natural) + ')';
});

const values = {
    D3: '今日やること', E3: '状況',
    D4: 'デスクトップ整理', E4: 'まだ',
    D5: '写真フォルダの整理', E5: 'まだ',
    D6: '不要な写真の削除', E6: 'まだ',
    D7: '大事な動画をHDDに移動', E7: 'まだ'
};
const columns = 'ABCDEFGHIJKLMNOPQ'.split('');
const sheet = document.getElementById('sheet');

function add(cls, text) {
    const div = document.createElement('div');
    div.className = cls;
    div.textContent = text || '';
    sheet.appendChild(div);
    return div;
}

add('corner');
columns.forEach(function(c) {
    add(c === 'H' ? 'col sel' : 'col', c);
});

for (let r = 1; r <= 20; r++) {
    add(r === 6 ? 'rowhead sel' : 'rowhead', r);
    columns.forEach(function(c) {
        const key = c + r;
        const centered = c === 'E' || key === 'D3';
        const cell = add('cell' + (values[key] ? ' text' : '') + (centered ? ' center' : ''), values[key]);
        if (key === 'H6') {
            const cursor = document.createElement('span');
            cursor.className = 'cell-cursor';
            cell.appendChild(cursor);
        }
    });
}
```
